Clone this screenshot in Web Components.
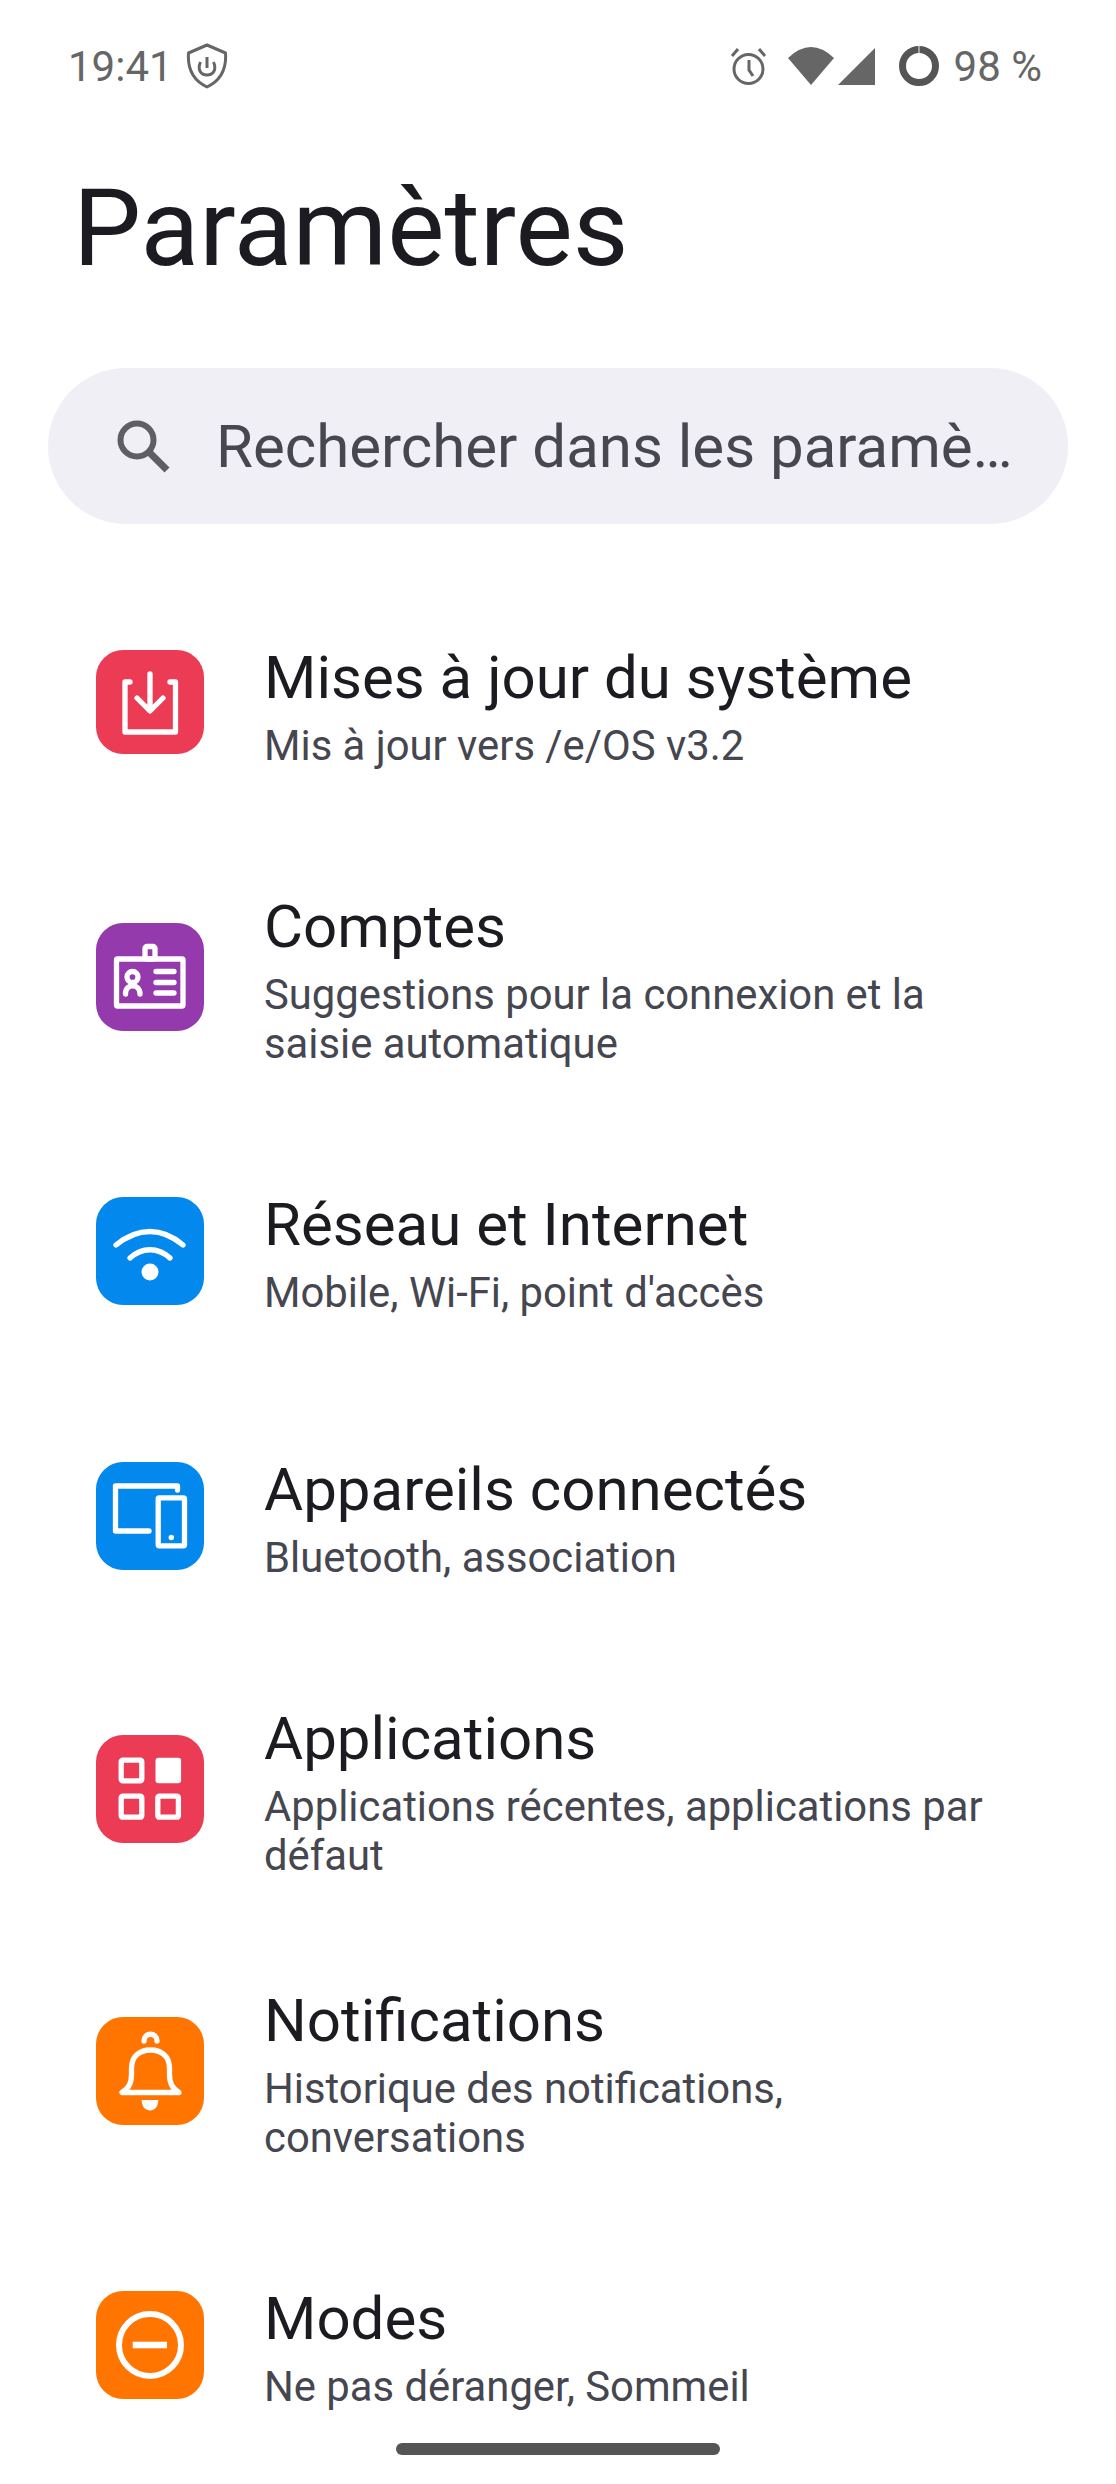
<!DOCTYPE html>
<html lang="fr">
<head>
<meta charset="utf-8">
<title>Paramètres</title>
<style>
    html, body { margin: 0; padding: 0; background: #fff; }
    body { width: 1116px; height: 2484px; overflow: hidden; font-family: Roboto, "Liberation Sans", sans-serif; }
</style>
</head>
<body>
<settings-page>
    <status-bar slot="status"></status-bar>
    <search-box slot="search" placeholder="Rechercher dans les paramè…"></search-box>

    <settings-row>
        <icon-tile slot="icon" kind="update" color="#ec3b55" tile-height="104" style="margin-top: 0"></icon-tile>
        Mises à jour du système
        <span slot="summary">Mis à jour vers /e/OS v3.2</span>
    </settings-row>
    <settings-row>
        <icon-tile slot="icon" kind="accounts" color="#953aad"></icon-tile>
        Comptes
        <span slot="summary">Suggestions pour la connexion et la saisie automatique</span>
    </settings-row>
    <settings-row style="margin-bottom: 129px">
        <icon-tile slot="icon" kind="wifi" color="#0389ee"></icon-tile>
        Réseau et Internet
        <span slot="summary">Mobile, Wi-Fi, point d'accès</span>
    </settings-row>
    <settings-row>
        <icon-tile slot="icon" kind="devices" color="#0389ee"></icon-tile>
        Appareils connectés
        <span slot="summary">Bluetooth, association</span>
    </settings-row>
    <settings-row style="margin-bottom: 97px">
        <icon-tile slot="icon" kind="apps" color="#ec3b55"></icon-tile>
        Applications
        <span slot="summary">Applications récentes, applications par défaut</span>
    </settings-row>
    <settings-row>
        <icon-tile slot="icon" kind="bell" color="#ff7500"></icon-tile>
        Notifications
        <span slot="summary">Historique des notifications, conversations</span>
    </settings-row>
    <settings-row>
        <icon-tile slot="icon" kind="modes" color="#ff7500"></icon-tile>
        Modes
        <span slot="summary">Ne pas déranger, Sommeil</span>
    </settings-row>
</settings-page>

<script>
const ICONS = {
    update: `
        <path d="M34 32H29V82H79.5V32H74" />
        <path d="M54 24V60M41 48L54 61L67 48" />`,
    accounts: `
        <rect x="20.5" y="36" width="66.5" height="47" rx="1" />
        <rect x="49" y="23.5" width="10" height="12.5" rx="2" />
        <circle cx="36.5" cy="54" r="5.5" />
        <path d="M29.5 71C29 60 44 60 44 71" />
        <path d="M60 48.5H78M60 59.5H78M60 70H78" />`,
    wifi: `
        <path d="M20 48C42 30 66 30 87 48" />
        <path d="M34 61C46 50 62 50 74 61" />
        <circle cx="54" cy="75" r="8.5" fill="#fff" stroke="none" />`,
    devices: `
        <path d="M53 69H19.5V24H81.5V28" />
        <rect x="62.2" y="35.8" width="26.3" height="48" rx="1" />
        <circle cx="75.3" cy="75.5" r="2.7" fill="#fff" stroke="none" />`,
    apps: `
        <rect x="25.2" y="25.2" width="20.6" height="20.6" rx="1.5" />
        <rect x="59.5" y="22.7" width="25.6" height="25.6" rx="3" fill="#fff" stroke="none" />
        <rect x="25.2" y="61.2" width="20.6" height="21" rx="1.5" />
        <rect x="61.8" y="61.2" width="20.6" height="21" rx="1.5" />`,
    bell: `
        <path d="M48 24C48 15 61 15 61 24" />
        <path d="M26 75.5H83C76 71 73.5 66 73.5 57V51C73.5 39 65 33 54.5 33C44 33 35.5 39 35.5 51V57C35.5 66 33 71 26 75.5Z" />
        <path d="M45.7 83H62.3C62.3 97 45.7 97 45.7 83Z" fill="#fff" stroke="none" />`,
    modes: `
        <circle cx="54" cy="54" r="31" stroke-width="6" />
        <rect x="36.7" y="50.7" width="34.3" height="6.6" fill="#fff" stroke="none" />`,
};

class IconTile extends HTMLElement {
    constructor() {
        super();
        this.attachShadow({ mode: "open" });
    }

    connectedCallback() {
        const height = this.getAttribute("tile-height") || "108";
        this.shadowRoot.innerHTML = `
            <style>
            :host {
                display: block;
                flex: none;
                width: 108px;
                height: ${height}px;
                border-radius: 27px;
                background-color: ${this.getAttribute("color")};
            }
            svg {
                display: block;
                fill: none;
                stroke: #fff;
                stroke-width: 5.3;
                stroke-linecap: round;
                stroke-linejoin: round;
            }
            </style>
            <svg width="108" height="${height}" viewBox="0 0 108 ${height}">${ICONS[this.getAttribute("kind")]}</svg>
        `;
    }
}

class SettingsRow extends HTMLElement {
    constructor() {
        super();
        this.attachShadow({ mode: "open" });
        this.shadowRoot.innerHTML = `
            <style>
            :host {
                display: flex;
                align-items: center;
                gap: 60px;
                padding: 0 96px 0 96px;
                margin-bottom: 113px;
            }
            ::slotted([slot="icon"]) { margin-top: 3px; }
            .text { min-width: 0; flex: 1; }
            .title {
                font-size: 60px;
                line-height: 87px;
                color: #1b1b21;
            }
            .summary {
                font-size: 41.8px;
                line-height: 49px;
                color: #45464f;
            }
            </style>
            <slot name="icon"></slot>
            <div class="text">
                <div class="title"><slot></slot></div>
                <div class="summary"><slot name="summary"></slot></div>
            </div>
        `;
    }
}

class SearchBox extends HTMLElement {
    constructor() {
        super();
        this.attachShadow({ mode: "open" });
    }

    connectedCallback() {
        this.shadowRoot.innerHTML = `
            <style>
            :host {
                display: flex;
                align-items: center;
                height: 156px;
                margin: 0 48px;
                padding-left: 68px;
                border-radius: 78px;
                background-color: #efeff5;
                box-sizing: border-box;
                color: #46474f;
                font-size: 60px;
                white-space: nowrap;
            }
            svg { flex: none; margin-right: 45px; }
            </style>
            <svg width="55" height="54" viewBox="0 0 55 54" fill="none" stroke="#5f5f63" stroke-width="6">
                <circle cx="21" cy="21" r="16.5" />
                <path d="M33 33L51 51" stroke-width="7" />
            </svg>
            <span>${this.getAttribute("placeholder")}</span>
        `;
    }
}

class StatusBar extends HTMLElement {
    constructor() {
        super();
        this.attachShadow({ mode: "open" });
        this.shadowRoot.innerHTML = `
            <style>
            :host {
                display: flex;
                align-items: center;
                height: 46px;
                padding: 43px 74px 0 68px;
                color: #666;
                font-size: 42px;
            }
            svg { display: block; flex: none; }
            .time { margin-right: 13px; }
            .spacer { flex: 1; }
            </style>
            <span class="time">19:41</span>
            <svg width="42" height="46" viewBox="0 0 42 46" fill="none" stroke="#666" stroke-width="3">
                <path d="M21 2L39.5 10C40.5 24 36 37 21 44C6 37 1.5 24 2.5 10Z" stroke-linejoin="round" />
                <path d="M14.5 19C11 27 15 32 21 32C27 32 31 27 27.5 19" />
                <path d="M21 14V25" />
            </svg>
            <div class="spacer"></div>
            <svg width="37" height="38" viewBox="0 0 37 38" fill="none" stroke="#666" stroke-width="3" style="margin-right: 21px">
                <circle cx="18.5" cy="22" r="14.5" />
                <path d="M19 13V23L23 29" />
                <path d="M2 9L8 2M35 9L29 2" />
            </svg>
            <svg width="46" height="38" viewBox="0 0 46 38" style="margin-right: 4px">
                <path d="M0 11Q23 -11 46 11L23 38Z" fill="#666" />
            </svg>
            <svg width="37" height="38" viewBox="0 0 37 38" style="margin-right: 24px">
                <path d="M37 1V38H0Z" fill="#666" />
            </svg>
            <svg width="40" height="40" viewBox="0 0 40 40" fill="none" stroke="#555" stroke-width="7" style="margin-right: 15px">
                <circle cx="20" cy="20" r="16.5" />
                <path d="M20 0V7" stroke="#bbb" stroke-width="1.5" />
            </svg>
            <span>98 %</span>
        `;
    }
}

class SettingsPage extends HTMLElement {
    constructor() {
        super();
        this.attachShadow({ mode: "open" });
        this.shadowRoot.innerHTML = `
            <style>
            :host {
                display: block;
                position: relative;
                height: 2484px;
                overflow: hidden;
                background: #fff;
            }
            h1 {
                margin: 0;
                padding: 65px 0 0 73px;
                height: 279px;
                box-sizing: border-box;
                font-size: 108px;
                line-height: 148px;
                font-weight: 400;
                color: #1b1b21;
            }
            .list { padding-top: 110px; }
            .home {
                position: absolute;
                left: 396px;
                top: 2443px;
                width: 324px;
                height: 12px;
                border-radius: 6px;
                background-color: #555;
            }
            </style>
            <slot name="status"></slot>
            <h1>Paramètres</h1>
            <slot name="search"></slot>
            <div class="list"><slot></slot></div>
            <div class="home"></div>
        `;
    }
}

customElements.define("icon-tile", IconTile);
customElements.define("settings-row", SettingsRow);
customElements.define("search-box", SearchBox);
customElements.define("status-bar", StatusBar);
customElements.define("settings-page", SettingsPage);
</script>
</body>
</html>
